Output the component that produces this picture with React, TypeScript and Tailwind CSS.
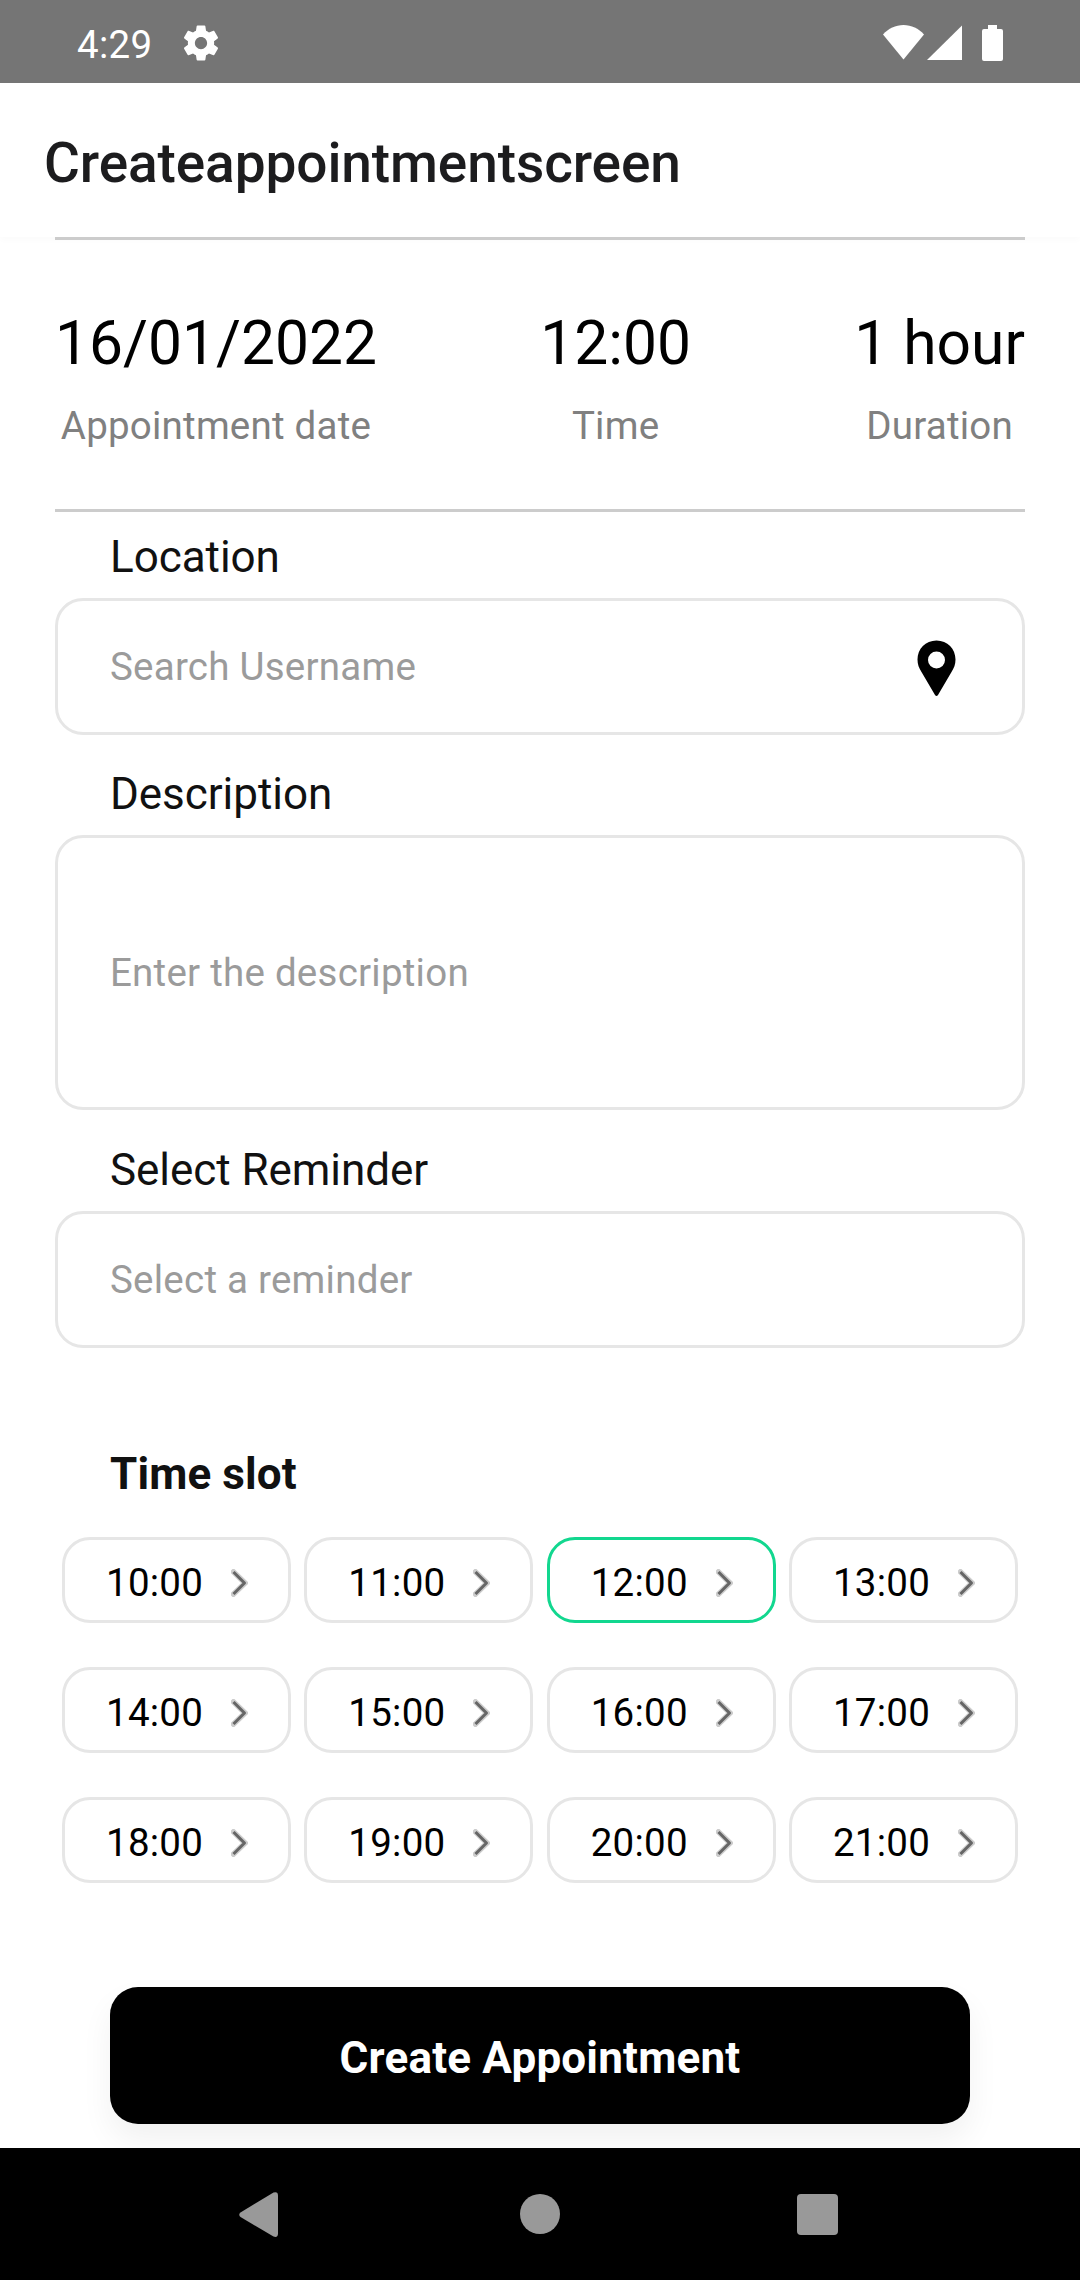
const SUMMARY = [
  { value: '16/01/2022', label: 'Appointment date' },
  { value: '12:00', label: 'Time' },
  { value: '1 hour', label: 'Duration' },
];

const SLOTS = [
  '10:00', '11:00', '12:00', '13:00',
  '14:00', '15:00', '16:00', '17:00',
  '18:00', '19:00', '20:00', '21:00',
];

function StatusBar() {
  return (
    <div className="flex h-[83px] items-center justify-between bg-[#757575] pt-[3px] pr-[77px] pl-[77px] text-white">
      <div className="flex items-center">
        <span className="w-[103px] pt-[2px] text-[38.5px] leading-[45px] tracking-[0.3px]">4:29</span>
        <svg viewBox="0 0 24 24" fill="currentColor" className="h-[42px] w-[42px]">
          <path d="M19.43 12.98c.04-.32.07-.64.07-.98s-.03-.66-.07-.98l2.11-1.65c.19-.15.24-.42.12-.64l-2-3.46c-.12-.22-.39-.3-.61-.22l-2.49 1c-.52-.4-1.08-.73-1.69-.98l-.38-2.65C14.46 2.18 14.25 2 14 2h-4c-.25 0-.46.18-.49.42l-.38 2.65c-.61.25-1.17.59-1.69.98l-2.49-1c-.23-.09-.49 0-.61.22l-2 3.46c-.13.22-.07.49.12.64l2.11 1.65c-.04.32-.07.65-.07.98s.03.66.07.98l-2.11 1.65c-.19.15-.24.42-.12.64l2 3.46c.12.22.39.3.61.22l2.49-1c.52.4 1.08.73 1.69.98l.38 2.65c.03.24.24.42.49.42h4c.25 0 .46-.18.49-.42l.38-2.65c.61-.25 1.17-.59 1.69-.98l2.49 1c.23.09.49 0 .61-.22l2-3.46c.12-.22.07-.49-.12-.64l-2.11-1.65zM12 15.5c-1.93 0-3.5-1.57-3.5-3.5s1.57-3.5 3.5-3.5 3.5 1.57 3.5 3.5-1.57 3.5-3.5 3.5z" />
        </svg>
      </div>
      <div className="flex h-9 items-start">
        <svg viewBox="0 0 41 35" fill="currentColor" className="h-[35px] w-[41px]">
          <path d="M0 9.5C5.5 3.5 12.5 0 20.5 0S35.5 3.5 41 9.5L20.5 34.5Z" />
        </svg>
        <svg viewBox="0 0 35 35" fill="currentColor" className="ml-[3px] h-[35px] w-[35px]">
          <path d="M0 35 35 0.5V35Z" />
        </svg>
        <svg viewBox="0 0 21 36" fill="currentColor" className="ml-5 h-9 w-[21px]">
          <path d="M6 0h9v4h4a2 2 0 0 1 2 2v28a2 2 0 0 1-2 2H2a2 2 0 0 1-2-2V6a2 2 0 0 1 2-2h4Z" />
        </svg>
      </div>
    </div>
  );
}

function Field({ label, placeholder, tall, pin }: { label: string; placeholder: string; tall?: boolean; pin?: boolean }) {
  return (
    <div>
      <div className="pl-[55px] text-[44px] leading-[52px] tracking-[-0.05px] text-[#111]">{label}</div>
      <div
        className={`mt-[15px] flex items-center justify-between rounded-[28px] border-3 border-[#e6e6e6] bg-white pr-[66px] pl-[52px] ${tall ? 'h-[275px]' : 'h-[137px]'}`}
      >
        <span className="text-[38.5px] leading-[45px] tracking-[0.24px] text-[#9b9b9b]">{placeholder}</span>
        {pin && (
          <svg viewBox="0 0 39 57" className="mt-[3px] h-[57px] w-[39px]">
            <path
              fillRule="evenodd"
              d="M19.5 0.5C8.5 0.5 0.5 9 0.5 19.5 0.5 24.5 2 28 4.5 32L18 55Q19.5 57 21 55L34.5 32C37 28 38.500 24.5 38.500 19.5 38.500 9 30.5 0.5 19.500 0.5ZM19.500 11.500a8.500 8.500 0 1 1 0 17 8.500 8.500 0 0 1 0-17Z"
            />
          </svg>
        )}
      </div>
    </div>
  );
}

function Slot({ time, selected }: { time: string; selected: boolean }) {
  return (
    <button
      className={`flex h-[86px] items-center justify-between rounded-[28px] border-3 bg-white pt-[5px] pr-10 pl-[41px] ${selected ? 'border-[#12d78f]' : 'border-[#e6e6e6]'}`}
    >
      <span className="text-[38.5px] leading-[45px] tracking-[0.25px]">{time}</span>
      <svg viewBox="0 0 17 28" fill="none" className="h-7 w-[17px]">
        <path d="M0.500 1 14 14 0.500 27" stroke="#000" strokeOpacity="0.2" strokeWidth="5.5" />
        <path d="M2.500 3 13.500 14 2.500 25" stroke="#666" strokeWidth="3" strokeLinejoin="round" />
      </svg>
    </button>
  );
}

export default function App() {
  return (
    <div className="flex h-[2280px] w-[1080px] flex-col overflow-hidden bg-white font-['Roboto',sans-serif] text-black">
      <StatusBar />
      <header className="h-[154px] bg-white pt-12 pl-11 shadow-[0_3px_7px_rgba(0,0,0,0.02)]">
        <h1 className="text-[55px] leading-[64px] font-medium tracking-[-0.1px] text-[#1c1c1e]">Createappointmentscreen</h1>
      </header>

      <main className="relative flex h-[1911px] flex-col px-[55px]">
        <section className="flex h-[275px] justify-between border-y-3 border-[#ccc] pt-[68px]">
          {SUMMARY.map(({ value, label }) => (
            <div key={label} className="flex flex-col items-center">
              <span className="text-[60.5px] leading-[71px]">{value}</span>
              <span className="mt-6 text-[38.5px] leading-[45px] tracking-[0.22px] text-[#808080]">{label}</span>
            </div>
          ))}
        </section>

        <div className="mt-[19px] flex flex-col">
          <Field label="Location" placeholder="Search Username" pin />
          <div className="mt-[33px] mb-[34px]">
            <Field label="Description" placeholder="Enter the description" tall />
          </div>
          <Field label="Select Reminder" placeholder="Select a reminder" />
        </div>

        <h2 className="mt-[100px] pl-[55px] text-[44px] leading-[52px] font-bold tracking-[0.12px] text-[#111]">Time slot</h2>
        <div className="mt-[37px] grid grid-cols-4 gap-x-[13.33px] gap-y-11 px-[7px]">
          {SLOTS.map((time) => (
            <Slot key={time} time={time} selected={time === '12:00'} />
          ))}
        </div>

        <button className="mx-[55px] mt-[104px] h-[137px] rounded-[28px] bg-black pt-[5px] text-[44px] leading-[52px] font-bold tracking-[0.2px] text-white shadow-[0_16px_32px_rgba(0,0,0,0.06)]">
          Create Appointment
        </button>
      </main>

      <nav className="relative flex h-[132px] items-center bg-black pl-[239px]">
        <svg viewBox="0 0 39 45" fill="#999" className="h-[45px] w-[39px]">
          <path d="M1.5 20.5 34.5 0.5Q39 -1 39 3.5V41.5Q39 46 34.5 44.5L1.5 25Q-1 22.5 1.5 20.5Z" />
        </svg>
        <span className="ml-[242px] h-10 w-10 rounded-full bg-[#999]" />
        <span className="ml-[237px] h-[41px] w-[41px] rounded-[4px] bg-[#999]" />
      </nav>
    </div>
  );
}
